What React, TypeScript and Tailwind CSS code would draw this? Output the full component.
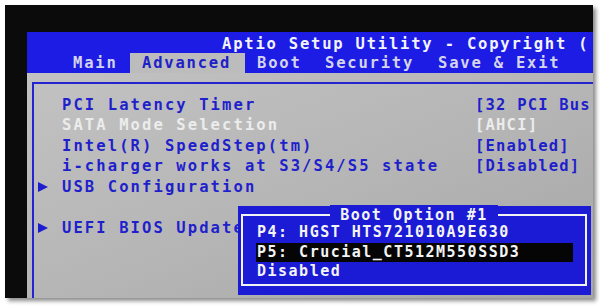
import React from "react";

const mono = { fontFamily: '"DejaVu Sans Mono", "Liberation Mono", monospace' };

interface RowProps {
  label: string;
  value?: string;
  arrow?: boolean;
  active?: boolean;
}

const Arrow = () => (
  <svg width="10" height="10" viewBox="0 0 10 10" className="block">
    <path d="M0 0 L10 5 L0 10 Z" fill="#1d1dd0" />
  </svg>
);

const SetupRow: React.FC<RowProps> = ({ label, value, arrow, active }) => {
  const color = active ? "text-[#ececec]" : "text-[#1f1fcc]";
  return (
    <div className="flex h-[20.5px] items-center whitespace-nowrap">
      <div className="flex w-[28px] shrink-0 items-center pl-[4px]">
        {arrow && <Arrow />}
      </div>
      <div className={`w-[413px] shrink-0 ${color}`}>{label}</div>
      {value && <div className={`tracking-[1.2px] ${color}`}>{value}</div>}
    </div>
  );
};

const BootPopup = () => (
  <div
    className="absolute left-[238px] top-[206px] h-[89px] w-[353px] bg-[#1b1bd6] pb-[9px] pl-[3px] pr-[4px] pt-[8px]"
    style={mono}
  >
    <div className="relative h-full border-2 border-[#f2f2f2] pl-[13px] pr-[12px] pt-[7px] text-[15px] font-semibold tracking-[1.5px] text-[#f4f4f4]">
      <div className="absolute -top-[11px] left-0 right-0 flex justify-center">
        <span className="bg-[#1b1bd6] px-[10px] leading-[20px]">Boot Option #1</span>
      </div>
      <div className="h-[19.5px] pl-[1px] leading-[19.5px]">P4: HGST HTS721010A9E630</div>
      <div className="h-[19.5px] bg-[#050505] pl-[1px] leading-[19.5px]">P5: Crucial_CT512M550SSD3</div>
      <div className="h-[19.5px] pl-[1px] leading-[19.5px]">Disabled</div>
    </div>
  </div>
);

export default function App() {
  return (
    <div className="relative h-[305px] w-[600px] overflow-hidden bg-white">
      <div className="ml-[5px] mt-[5px] h-[293px] w-[588px] bg-[#0b0b0b] pl-[22px] pt-[27px] shadow-[3px_3px_4px_rgba(0,0,0,0.45)]">
        <div className="flex h-full w-full flex-col overflow-hidden font-semibold" style={mono}>
          <div className="h-[41px] shrink-0 bg-[#1c1ce4]">
            <div className="h-[21px] whitespace-nowrap pl-[195px] pt-[3px] text-[15.5px] leading-[18px] tracking-[1.8px] text-[#f3f3ff]">
              Aptio Setup Utility - Copyright (
            </div>
            <div className="flex h-[20px] items-stretch whitespace-nowrap text-[15.5px] leading-[20px] tracking-[1.8px] text-[#d4d4ec]">
              <span className="ml-[46px] w-[57px]">Main</span>
              <span className="w-[115px] bg-[#bcbcbc] pl-[12px] text-[#2020c8]">Advanced</span>
              <span className="ml-[12px] w-[68px]">Boot</span>
              <span className="w-[113px]">Security</span>
              <span>Save &amp; Exit</span>
            </div>
          </div>
          <div className="flex-1 bg-gradient-to-br from-[#c2c2c2] via-[#b6b6b6] to-[#a6a6a6] pl-[5px] pt-[9px]">
            <div className="h-full border-l-2 border-t-2 border-[#2424d0] pt-[11px] text-[15.5px] tracking-[2.1px]">
              <SetupRow label="PCI Latency Timer" value="[32 PCI Bus" />
              <SetupRow label="SATA Mode Selection" value="[AHCI]" active />
              <SetupRow label="Intel(R) SpeedStep(tm)" value="[Enabled]" />
              <SetupRow label="i-charger works at S3/S4/S5 state" value="[Disabled]" />
              <SetupRow label="USB Configuration" arrow />
              <div className="h-[20.5px]" />
              <SetupRow label="UEFI BIOS Update" arrow />
            </div>
          </div>
        </div>
      </div>
      <BootPopup />
    </div>
  );
}
